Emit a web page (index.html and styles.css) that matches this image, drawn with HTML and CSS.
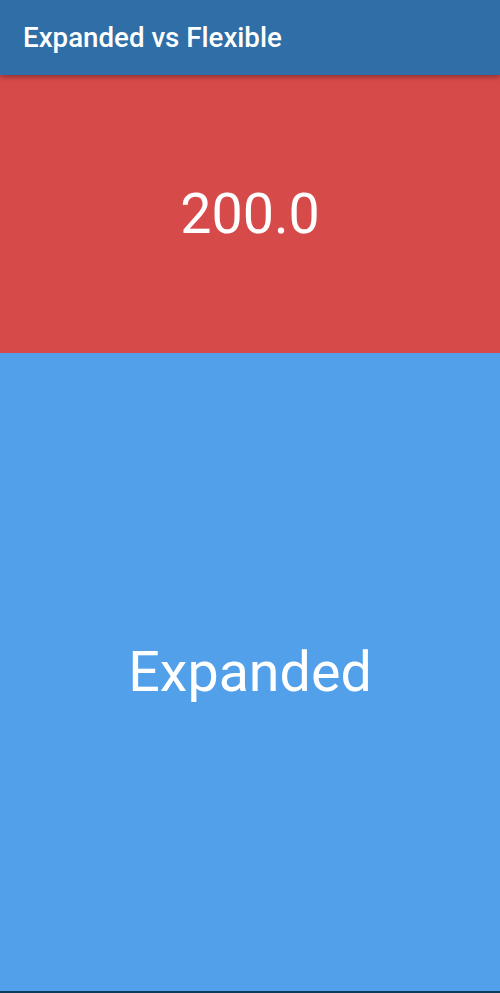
FILE: index.html
```html
<!DOCTYPE html>
<html>
<head>
<meta charset="utf-8">
<link rel="stylesheet" href="styles.css">
</head>
<body>
<div class="screen">
  <header class="appbar"><h1 class="title">Expanded vs Flexible</h1></header>
  <main class="content">
    <section class="box box-red"><span class="label">200.0</span></section>
    <section class="box box-blue"><span class="label">Expanded</span></section>
  </main>
  <div class="navline"></div>
</div>
</body>
</html>
```
FILE: styles.css
```css
* { box-sizing: border-box; }
html, body { margin: 0; padding: 0; }
body { font-family: Roboto, "Noto Sans", sans-serif; background: #0d3a5a; }
.screen { width: 500px; height: 993px; display: flex; flex-direction: column; position: relative; }
.appbar {
  height: 75px; flex: none; background: #2f6ea6;
  display: flex; align-items: center; padding-left: 23px; padding-bottom: 1px;
  box-shadow: 0 2px 5px rgba(0,0,0,0.35); position: relative; z-index: 2;
}
.title { margin: 0; color: #fff; font-size: 27.7px; font-weight: 500; letter-spacing: 0; }
.content { flex: 1; display: flex; flex-direction: column; }
.box { display: flex; align-items: center; justify-content: center; color: #fff; }
.box-red { height: 278px; flex: none; background: #d64b4a; }
.box-blue { flex: 1; background: #52a0e9; }
.label { font-size: 55.6px; font-weight: 400; }
.navline { height: 2px; flex: none; background: #0d3a5a; }
```
